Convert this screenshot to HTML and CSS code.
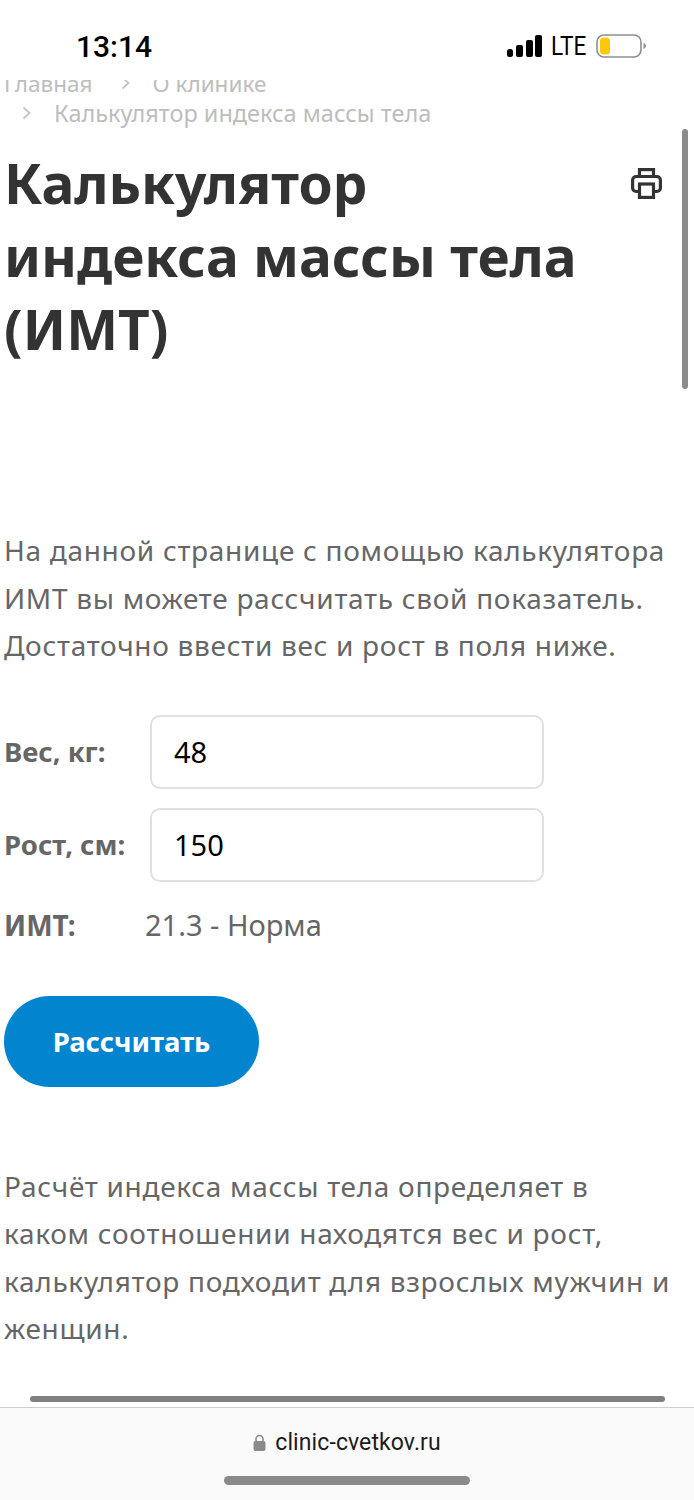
FILE: index.html
```html
<!DOCTYPE html>
<html lang="ru">
<head>
    <meta charset="UTF-8">
    <meta name="viewport" content="width=device-width, initial-scale=1.0">
    <title>Калькулятор индекса массы тела</title>
    <link rel="stylesheet" href="styles.css">
</head>
<body>

    <div class="status-bar">
        <span class="status-time">13:14</span>
        <div class="status-right">
            <svg class="signal" width="35" height="22" viewBox="0 0 35 22">
                <rect x="0" y="14" width="6" height="8" rx="2.500" fill="#000"/>
                <rect x="9" y="10" width="7" height="12" rx="2" fill="#000"/>
                <rect x="19" y="5" width="7" height="17" rx="2" fill="#000"/>
                <rect x="28" y="0" width="7" height="22" rx="2" fill="#000"/>
            </svg>
            <span class="status-lte">LTE</span>
            <svg class="battery" width="52" height="25" viewBox="0 0 52 25">
                <rect x="1" y="1" width="44" height="22" rx="7" fill="#fff" stroke="#8e8e8e" stroke-width="1.600"/>
                <rect x="4" y="3.500" width="10" height="17" rx="3.500" fill="#fdc80a"/>
                <path d="M47.500 9c1.600.5 2.400 1.700 2.400 3s-.8 2.500-2.400 3z" fill="#8e8e8e"/>
            </svg>
        </div>
    </div>

    <div class="page">
        <div class="crumbs">
            <div class="crumbs-line crumbs-cut">
                <span>Главная</span>
                <svg class="crumb-sep" width="9" height="14" viewBox="0 0 9 14" fill="none" stroke="#c4c4c4" stroke-width="1.800"><path d="M1.500 1.500l6 5.500-6 5.500"/></svg>
                <span>О клинике</span>
            </div>
            <div class="crumbs-line crumbs-last">
                <svg class="crumb-sep" width="9" height="14" viewBox="0 0 9 14" fill="none" stroke="#c4c4c4" stroke-width="1.800"><path d="M1.500 1.500l6 5.500-6 5.500"/></svg>
                <span>Калькулятор индекса массы тела</span>
            </div>
        </div>

        <div class="title-row">
            <h1>Калькулятор индекса массы тела (ИМТ)</h1>
            <svg class="print-icon" width="31" height="31" viewBox="0 0 31 31" fill="#fff" stroke="#333" stroke-width="3.200">
                <rect x="8.500" y="1.600" width="14" height="8"/>
                <rect x="1.600" y="8.500" width="27.800" height="15" rx="3.500"/>
                <rect x="8.500" y="16" width="14" height="13.400"/>
            </svg>
        </div>

        <p class="text intro">На данной странице с помощью калькулятора ИМТ вы можете рассчитать свой показатель. Достаточно ввести вес и рост в поля ниже.</p>

        <form class="calc">
            <div class="calc-row">
                <label for="weight">Вес, кг:</label>
                <input type="text" id="weight" value="48">
            </div>
            <div class="calc-row">
                <label for="height">Рост, см:</label>
                <input type="text" id="height" value="150">
            </div>
            <div class="calc-result">
                <span class="result-label">ИМТ:</span>
                <span class="result-value">21.3 - Норма</span>
            </div>
            <button type="button" class="btn-calc">Рассчитать</button>
        </form>

        <p class="text outro">Расчёт индекса массы тела определяет в каком соотношении находятся вес и рост, калькулятор подходит для взрослых мужчин и женщин.</p>
    </div>

    <div class="scroll-v"></div>
    <div class="scroll-h"></div>

    <div class="address-bar">
        <div class="address">
            <svg width="13" height="17" viewBox="0 0 13 17">
                <path d="M3 8V5a3.500 3.500 0 0 1 7 0v3" fill="none" stroke="#8a8a8e" stroke-width="1.600"/>
                <rect x="0.500" y="7" width="12" height="10" rx="2" fill="#8a8a8e"/>
            </svg>
            <span>clinic-cvetkov.ru</span>
        </div>
        <div class="home-bar"></div>
    </div>

</body>
</html>
```

FILE: styles.css
```css
* {
    box-sizing: border-box;
}
html, body {
    height: 100%;
}
body {
    margin: 0;
    position: relative;
    display: flex;
    flex-direction: column;
    overflow: hidden;
    background: #fff;
    color: #666;
    font-family: "Noto Sans", Arial, sans-serif;
}

.status-bar {
    height: 78px;
    flex: none;
    display: flex;
    justify-content: space-between;
    align-items: center;
    padding: 14px 46px 0 76px;
}
.status-time {
    font-family: Roboto, Arial, sans-serif;
    font-size: 30px;
    font-weight: 500;
    color: #000;
}
.status-right {
    display: flex;
    align-items: center;
    gap: 10px;
}
.status-lte {
    font-family: Roboto, Arial, sans-serif;
    font-size: 25px;
    color: #000;
    transform: scaleX(0.9);
    margin: 0 -2px 0 -3px;
}

.page {
    flex: 1;
    padding-left: 4px;
    overflow: hidden;
}

.crumbs {
    color: #bdbdbd;
    font-size: 23.500px;
    height: 48px;
    padding-top: 2px;
}
.crumbs-line {
    display: flex;
    align-items: center;
    height: 31px;
}
.crumbs-cut {
    height: 13px;
    overflow: hidden;
    align-items: flex-start;
    font-size: 22.500px;
    line-height: 31px;
}
.crumbs-cut span {
    margin-top: -12px;
}
.crumbs-cut .crumb-sep {
    margin: -4px 23px 0 28px;
}
.crumbs-last {
    padding-left: 18px;
    margin-top: 4px;
}
.crumbs-last .crumb-sep {
    margin-right: 23px;
}

.title-row {
    display: flex;
    justify-content: space-between;
    align-items: flex-start;
    padding: 0 32px 0 0;
    margin-top: 20px;
}
h1 {
    margin: 0;
    width: 590px;
    font-size: 55px;
    line-height: 73px;
    font-weight: 700;
    color: #333;
}
.print-icon {
    margin-top: 22px;
}

.text {
    margin: 0;
    max-width: 675px;
    font-size: 28px;
    line-height: 47.500px;
    letter-spacing: 0.700px;
    color: #666;
}
.intro {
    margin-top: 162px;
}
.outro {
    margin-top: 76px;
}

.calc {
    margin-top: 45px;
}
.calc-row {
    display: flex;
    align-items: center;
    height: 74px;
    margin-bottom: 19px;
}
.calc-row label {
    width: 146px;
    font-size: 27.500px;
    font-weight: 700;
}
.calc-row input {
    width: 394px;
    height: 74px;
    border: 2px solid #e0e0e0;
    border-radius: 10px;
    padding: 0 22px;
    font: 400 29px "Noto Sans", Arial, sans-serif;
    color: #000;
    background: #fff;
}
.calc-result {
    display: flex;
    align-items: center;
    height: 48px;
    font-size: 29px;
}
.result-label {
    width: 141px;
    font-size: 28px;
    font-weight: 700;
}
.btn-calc {
    display: block;
    width: 255px;
    height: 91px;
    margin-top: 47px;
    border: none;
    border-radius: 46px;
    background: #0284cf;
    color: #fff;
    font: 700 27.500px "Noto Sans", Arial, sans-serif;
}

.scroll-v {
    position: absolute;
    top: 129px;
    left: 682px;
    width: 6px;
    height: 260px;
    border-radius: 3px;
    background: #8c8c8c;
}
.scroll-h {
    position: absolute;
    top: 1396px;
    left: 30px;
    width: 635px;
    height: 6px;
    border-radius: 3px;
    background: #808080;
}

.address-bar {
    flex: none;
    height: 93px;
    border-top: 1.500px solid #cfcfcf;
    background: #fafafa;
    display: flex;
    flex-direction: column;
    align-items: center;
}
.address {
    display: flex;
    align-items: center;
    gap: 9px;
    margin-top: 18px;
    height: 32px;
    font-family: Roboto, Arial, sans-serif;
    font-size: 23px;
    letter-spacing: 0.100px;
    color: #1c1c1c;
}
.home-bar {
    width: 246px;
    height: 9px;
    margin-top: 18px;
    border-radius: 5px;
    background: #8a8a8a;
}
```
